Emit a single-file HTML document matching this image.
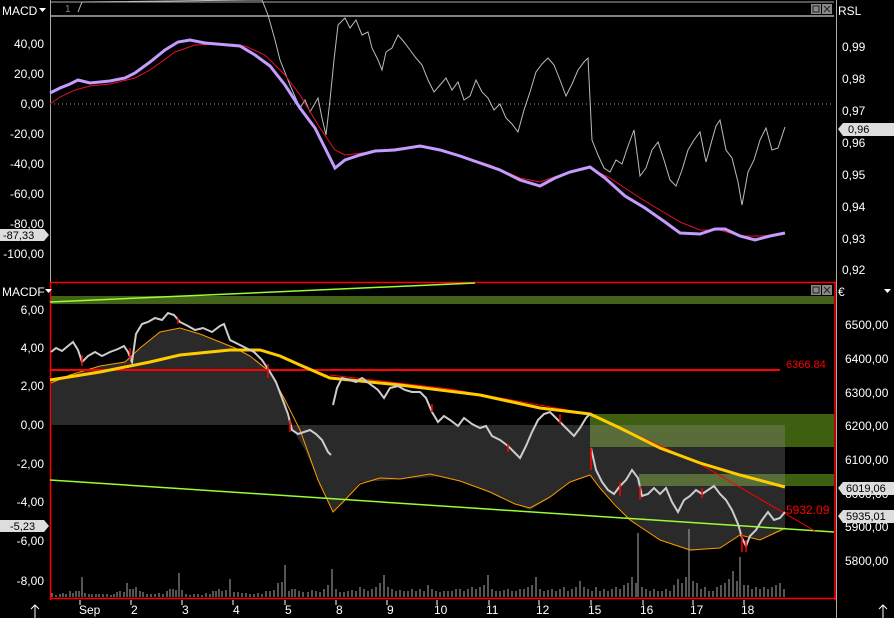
<!DOCTYPE html>
<html><head><meta charset="utf-8"><style>
html,body{margin:0;padding:0;background:#000;width:894px;height:618px;overflow:hidden}
svg{display:block;font-family:"Liberation Sans",sans-serif}
.ax{fill:#fff;font-size:12px}
</style></head><body>
<svg width="894" height="618" viewBox="0 0 894 618">
<!-- top panel frame -->
<line x1="50" y1="16" x2="834" y2="16" stroke="#aaa" stroke-width="1.5"/>
<line x1="50" y1="2" x2="834" y2="2" stroke="#aaa" stroke-width="1"/>
<line x1="50.5" y1="0" x2="50.5" y2="282" stroke="#aaa"/>
<line x1="836.5" y1="0" x2="836.5" y2="618" stroke="#aaa"/>
<text x="65" y="12" fill="#888" font-size="10">1</text>
<rect x="811" y="4" width="10" height="10" fill="#888"/><rect x="813" y="6" width="6" height="6" fill="none" stroke="#222"/>
<rect x="822" y="4" width="10" height="10" fill="#888"/><path d="M824 6l6 6M830 6l-6 6" stroke="#222"/>
<text x="2" y="15" class="ax">MACD</text><path d="M39 8h7l-3.5 4z" fill="#fff"/>
<text x="838" y="15" class="ax">RSL</text>
<!-- top left labels -->
<g class="ax" text-anchor="end">
<text x="44" y="48">40,00</text><text x="44" y="78">20,00</text><text x="44" y="108">0,00</text>
<text x="44" y="138">-20,00</text><text x="44" y="168">-40,00</text><text x="44" y="198">-60,00</text>
<text x="44" y="228">-80,00</text><text x="44" y="258">-100,00</text>
</g>
<path d="M0 229h44l5 6-5 6H0z" fill="#ddd"/><text x="3" y="239" font-size="11" fill="#000">-87,33</text>
<g class="ax">
<text x="842" y="51">0,99</text><text x="842" y="83">0,98</text><text x="842" y="115">0,97</text>
<text x="842" y="147">0,96</text><text x="842" y="179">0,95</text><text x="842" y="211">0,94</text>
<text x="842" y="243">0,93</text><text x="842" y="274">0,92</text>
</g>
<path d="M838 129l5-6h51v13h-51z" fill="#ddd"/><text x="848" y="133" font-size="11" fill="#000">0,96</text>
<line x1="50" y1="104" x2="834" y2="104" stroke="#999" stroke-dasharray="1 3"/>
<polyline fill="none" stroke="#bbb" stroke-width="1" points="78,12 82,2 250,0 262,0 268,15 275,40 280,60 290,85 300,108 305,100 310,112 318,98 322,118 326,135 330,100 334,60 338,25 345,18 350,28 356,20 362,35 368,32 372,48 378,60 382,70 386,52 392,48 398,35 404,42 410,50 416,58 422,65 428,80 434,92 440,85 446,78 452,90 458,82 464,100 470,96 476,80 482,92 488,98 494,110 500,104 506,118 512,124 518,132 524,110 530,92 536,72 542,64 548,58 554,65 560,80 566,96 572,84 578,70 584,62 588,58 592,140 598,155 604,168 610,172 616,160 622,164 628,146 634,130 640,176 646,168 652,150 658,142 664,160 670,180 676,186 682,170 688,150 694,140 700,132 706,162 712,140 716,126 720,120 726,150 732,158 738,182 742,205 748,172 754,160 760,140 766,128 772,150 778,148 785,127"/>
<polyline fill="none" stroke="#e0102a" stroke-width="1" points="50,104 60,97 75,90 90,86 110,84 135,78 150,70 175,52 195,45 215,44 245,46 265,55 285,75 300,95 320,128 335,150 345,155 370,152 400,148 425,147 450,153 490,165 520,178 540,182 560,175 590,168 610,178 640,198 680,222 700,230 720,230 740,236 760,236 785,234"/>
<polyline fill="none" stroke="#c49bff" stroke-width="3" points="50,93 60,88 70,84 78,80 90,83 110,81 125,78 135,73 150,62 165,50 178,42 190,40 205,43 240,46 255,55 270,66 285,85 300,108 315,128 325,148 335,168 345,160 360,155 375,151 395,150 420,146 440,150 460,156 480,163 500,170 520,180 540,186 555,178 570,172 590,167 605,178 625,196 645,208 665,222 680,233 700,234 715,229 725,229 740,236 755,240 770,236 785,233"/>
<line x1="50" y1="282.5" x2="836" y2="282.5" stroke="#f00" stroke-width="1.5"/>
<!-- bottom panel -->
<line x1="50.5" y1="282" x2="50.5" y2="600" stroke="#f00" stroke-width="1.5"/>
<line x1="835" y1="282" x2="835" y2="600" stroke="#f00" stroke-width="1.5"/>
<line x1="50" y1="598.5" x2="836" y2="598.5" stroke="#f00" stroke-width="1.5"/>
<text x="2" y="296" class="ax">MACDF</text><path d="M45 289h7l-3.5 4z" fill="#fff"/>
<text x="838" y="296" class="ax">€</text><path d="M884 289h7l-3.5 4z" fill="#fff"/>
<rect x="811" y="285" width="10" height="10" fill="#888"/><rect x="813" y="287" width="6" height="6" fill="none" stroke="#222"/>
<rect x="822" y="285" width="10" height="10" fill="#888"/><path d="M824 287l6 6M830 287l-6 6" stroke="#222"/>
<g class="ax" text-anchor="end">
<text x="44" y="314">6,00</text><text x="44" y="352">4,00</text><text x="44" y="390">2,00</text>
<text x="44" y="429">0,00</text><text x="44" y="468">-2,00</text><text x="44" y="506">-4,00</text>
<text x="44" y="545">-6,00</text><text x="44" y="585">-8,00</text>
</g>
<path d="M0 520h44l5 6-5 6H0z" fill="#ddd"/><text x="10" y="530" font-size="11" fill="#000">-5,23</text>
<g class="ax">
<text x="845" y="329">6500,00</text><text x="845" y="363">6400,00</text><text x="845" y="397">6300,00</text>
<text x="845" y="430">6200,00</text><text x="845" y="464">6100,00</text><text x="845" y="498">6000,00</text>
<text x="845" y="531">5900,00</text><text x="845" y="565">5800,00</text>
</g>
<path d="M838 488l5-6h51v13h-51z" fill="#ddd"/><text x="846" y="492" font-size="11" fill="#000">6019,06</text>
<path d="M838 516l5-6h51v13h-51z" fill="#ddd"/><text x="846" y="520" font-size="11" fill="#000">5935,01</text>
<!-- green bands -->
<rect x="51" y="296" width="783" height="8" fill="#44621a"/>
<rect x="590" y="414" width="244" height="33" fill="#3f5f10"/>
<rect x="639" y="474" width="195" height="12" fill="#3f5f10"/>
<!-- gray fill -->
<polygon fill="#2a2a2a" points="51,383 70,375 100,366 125,362 140,348 160,332 180,328 200,334 220,342 235,348 250,356 270,372 285,400 290,425 51,425"/>
<polygon fill="#2a2a2a" points="290,425 785,425 785,530 760,540 740,535 720,548 690,551 660,540 630,520 610,498 598,485 590,475 570,482 550,498 530,510 505,500 480,488 460,481 440,476 420,478 400,479 380,481 360,482 350,495 340,505 333,512 318,480 305,450"/>
<rect x="590" y="425" width="195" height="22" fill="#586d3a"/>
<rect x="639" y="474" width="146" height="12" fill="#586d3a"/>
<!-- orange curve -->
<polyline fill="none" stroke="#f90" stroke-width="1" points="51,383 70,375 100,366 125,362 140,348 160,332 180,328 200,334 220,342 235,348 250,356 270,372 285,400 300,430 318,480 333,512 345,500 360,484 380,478 400,479 430,474 460,481 490,492 515,504 530,508 550,497 570,482 590,475 600,488 615,505 630,520 660,540 690,550 720,548 740,535 760,540 785,528"/>
<!-- green trend lines -->
<line x1="50" y1="480" x2="834" y2="532" stroke="#9f3" stroke-width="1.5"/>
<line x1="50" y1="302" x2="475" y2="283" stroke="#9f3" stroke-width="1.5"/>
<!-- red lines -->
<line x1="50" y1="370" x2="780" y2="370" stroke="#f00" stroke-width="2"/>
<text x="786" y="368" fill="#f00" font-size="11">6366.84</text>
<polyline fill="none" stroke="#f00" stroke-width="1" points="330,375 450,389 590,414 700,464 815,531"/>
<text x="786" y="514" fill="#f00" font-size="12">5932.09</text>
<!-- yellow -->
<polyline fill="none" stroke="#fc0" stroke-width="3" points="50,380 100,372 150,362 180,355 230,350 260,350 280,356 300,365 330,378 400,385 480,395 540,408 590,414 620,428 660,448 700,463 740,475 785,487"/>
<!-- price -->
<polyline fill="none" stroke="#ccc" stroke-width="2" points="51,352 56,348 62,351 68,346 73,342 78,350 82,362 88,356 95,352 102,356 110,352 118,349 124,346 128,352 132,362 136,334 142,324 148,322 155,318 162,320 168,313 174,315 180,322 188,326 195,330 203,328 212,332 220,326 224,324 230,340 238,344 246,348 254,352 262,360 270,372 276,382 282,398 288,414 292,430 298,434 304,432 310,430 316,434 322,440 328,452 331,455"/>
<polyline fill="none" stroke="#ccc" stroke-width="2" points="333,405 337,388 342,378 350,380 356,382 362,378 370,384 378,390 384,398 390,388 398,386 405,390 412,392 420,392 426,398 432,412 438,422 444,416 450,420 458,426 464,418 472,424 480,428 486,426 492,436 500,440 508,446 514,452 520,458 526,446 532,432 538,420 544,414 550,412 556,418 562,424 568,430 574,436 580,428 586,418 590,414"/>
<polyline fill="none" stroke="#ccc" stroke-width="2" points="591,448 596,470 602,482 608,490 614,494 620,486 626,480 632,470 638,478 642,496 648,494 654,488 660,494 666,488 672,502 678,512 684,500 690,496 696,490 702,494 708,490 714,486 720,494 726,500 732,510 738,524 742,538 746,546 750,536 756,530 762,520 768,512 774,520 780,518 785,512"/>
<!-- red candle marks -->
<g stroke="#f00" stroke-width="1.5">
<line x1="82" y1="355" x2="82" y2="366"/><line x1="130" y1="348" x2="130" y2="360"/><line x1="178" y1="318" x2="178" y2="324"/>
<line x1="268" y1="364" x2="268" y2="378"/><line x1="290" y1="420" x2="290" y2="432"/><line x1="432" y1="404" x2="432" y2="412"/>
<line x1="508" y1="444" x2="508" y2="452"/><line x1="591" y1="448" x2="591" y2="470"/><line x1="640" y1="486" x2="640" y2="500"/>
<line x1="702" y1="488" x2="702" y2="498"/><line x1="742" y1="534" x2="742" y2="552"/><line x1="746" y1="540" x2="746" y2="552"/>
<line x1="620" y1="482" x2="620" y2="496"/><line x1="560" y1="414" x2="560" y2="424"/>
</g>
<!-- volume -->
<g stroke="#aaa" stroke-width="1">
<path d="M52 597v-4M56 597v-2M60 597v-3M63 597v-4M66 597v-3M70 597v-6M73 597v-4M76 597v-6M79 597v-6M82 597v-20M85 597v-4M89 597v-3M92 597v-3M96 597v-3M99 597v-3M103 597v-3M107 597v-3M111 597v-2M114 597v-3M117 597v-5M120 597v-6M124 597v-5M127 597v-14M130 597v-8M133 597v-8M136 597v-10M140 597v-6M143 597v-5M147 597v-3M151 597v-3M155 597v-3M159 597v-4M163 597v-3M167 597v-6M170 597v-8M173 597v-8M176 597v-7M179 597v-24M182 597v-7M186 597v-3M190 597v-2M194 597v-3M198 597v-3M202 597v-2M206 597v-4M210 597v-3M213 597v-6M216 597v-6M219 597v-8M222 597v-6M226 597v-7M230 597v-18M234 597v-5M238 597v-5M242 597v-4M246 597v-4M250 597v-3M254 597v-3M258 597v-4M262 597v-3M266 597v-6M270 597v-6M274 597v-7M278 597v-14M282 597v-15M285 597v-32M289 597v-6M292 597v-8M295 597v-8M299 597v-6M303 597v-5M308 597v-5M312 597v-7M316 597v-6M320 597v-5M324 597v-8M328 597v-12M332 597v-28M336 597v-8M340 597v-5M344 597v-5M348 597v-6M352 597v-7M356 597v-6M360 597v-10M364 597v-8M368 597v-6M372 597v-8M376 597v-10M380 597v-14M384 597v-22M388 597v-10M392 597v-8M396 597v-6M400 597v-7M404 597v-6M408 597v-6M412 597v-8M416 597v-6M420 597v-8M424 597v-6M428 597v-12M432 597v-8M436 597v-6M440 597v-5M444 597v-6M448 597v-6M452 597v-6M456 597v-8M460 597v-8M464 597v-6M468 597v-8M472 597v-10M476 597v-8M480 597v-10M484 597v-12M488 597v-22M492 597v-8M496 597v-6M500 597v-6M504 597v-7M508 597v-8M512 597v-6M516 597v-6M520 597v-8M524 597v-8M528 597v-10M532 597v-12M536 597v-20M540 597v-8M544 597v-6M548 597v-7M552 597v-8M556 597v-6M560 597v-8M564 597v-10M568 597v-6M572 597v-8M576 597v-10M580 597v-16M584 597v-10M588 597v-8M592 597v-6M596 597v-10M600 597v-6M604 597v-8M608 597v-6M612 597v-8M616 597v-10M620 597v-8M624 597v-12M628 597v-14M632 597v-20M636 597v-14M638 597v-64M642 597v-10M646 597v-8M650 597v-6M654 597v-8M658 597v-6M662 597v-6M666 597v-8M670 597v-6M674 597v-12M678 597v-18M682 597v-14M686 597v-20M689 597v-68M693 597v-16M697 597v-14M701 597v-8M705 597v-10M709 597v-6M713 597v-6M717 597v-10M721 597v-12M725 597v-14M729 597v-18M733 597v-26M737 597v-16M740 597v-40M744 597v-12M748 597v-12M752 597v-8M756 597v-10M760 597v-8M764 597v-10M768 597v-8M772 597v-10M776 597v-12M780 597v-14M784 597v-8"/>
</g>
<!-- x axis -->
<g stroke="#fff"><path d="M80 600v5M131 600v5M182 600v5M233 600v5M285 600v5M336 600v5M387 600v5M437 600v5M489 600v5M539 600v5M591 600v5M643 600v5M693 600v5M744 600v5"/></g>
<g class="ax" font-size="11">
<text x="79" y="614">Sep</text><text x="131" y="614">2</text><text x="182" y="614">3</text><text x="233" y="614">4</text>
<text x="285" y="614">5</text><text x="336" y="614">8</text><text x="387" y="614">9</text><text x="434" y="614">10</text>
<text x="486" y="614">11</text><text x="536" y="614">12</text><text x="588" y="614">15</text><text x="640" y="614">16</text>
<text x="690" y="614">17</text><text x="741" y="614">18</text>
</g>
<path d="M35 618v-13M31 609l4-4 4 4M883 618v-13M879 609l4-4 4 4" stroke="#fff" fill="none"/>
</svg>
</body></html>
